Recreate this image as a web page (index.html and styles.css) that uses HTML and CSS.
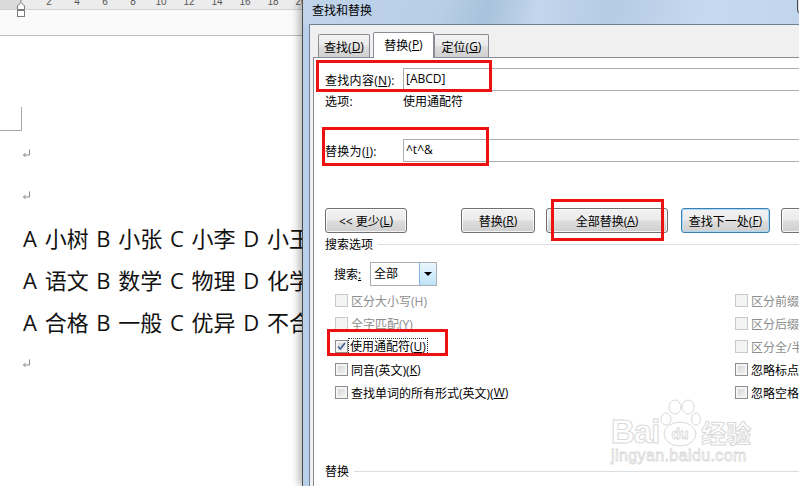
FILE: index.html
```html
<!DOCTYPE html>
<html lang="zh-CN">
<head>
    <meta charset="UTF-8">
    <title>查找和替换</title>
    <link rel="stylesheet" href="styles.css">
</head>
<body>
    <div class="screen">
        <div class="doc">
            <div class="ruler">
                <span class="ruler-margin"></span>
                <div class="ruler-nums">
                    <span>2</span><span>4</span><span>6</span><span>8</span><span>10</span>
                    <span>12</span><span>14</span><span>16</span><span>18</span><span>20</span>
                </div>
            </div>
            <div class="ruler-bar"></div>
            <svg class="indent-marker" width="10" height="19" viewBox="0 0 10 19">
                <path d="M5 0 V2" stroke="#777" fill="none"/>
                <path d="M1.5 9.5 V6 L5 2.5 L8.5 6 V9.5 Z" stroke="#7a7a7a" fill="#fff"/>
                <rect x="1.5" y="10.5" width="7" height="6" stroke="#7a7a7a" fill="#fff"/>
            </svg>
            <div class="page">
                <div class="corner"></div>
                <div class="text-block">
                    <p class="line"><svg class="ret" width="9" height="9" viewBox="0 0 9 9"><path d="M7.5 0.5 V6 H1.5 M3.5 4 L1.5 6 L3.5 8" stroke="#8a8a8a" fill="none"/></svg></p>
                    <p class="line"><svg class="ret" width="9" height="9" viewBox="0 0 9 9"><path d="M7.5 0.5 V6 H1.5 M3.5 4 L1.5 6 L3.5 8" stroke="#8a8a8a" fill="none"/></svg></p>
                    <p class="line">A 小树 B 小张 C 小李 D 小王</p>
                    <p class="line">A 语文 B 数学 C 物理 D 化学</p>
                    <p class="line">A 合格 B 一般 C 优异 D 不合格</p>
                    <p class="line"><svg class="ret" width="9" height="9" viewBox="0 0 9 9"><path d="M7.5 0.5 V6 H1.5 M3.5 4 L1.5 6 L3.5 8" stroke="#8a8a8a" fill="none"/></svg></p>
                </div>
            </div>
        </div>

        <div class="dialog">
            <div class="titlebar">
                <span class="title">查找和替换</span>
            </div>
            <span class="close-btn"></span>
            <div class="client">
                <div class="tabs">
                    <div class="tab tab-find">查找(<u>D</u>)</div>
                    <div class="tab tab-replace active">替换(<u>P</u>)</div>
                    <div class="tab tab-goto">定位(<u>G</u>)</div>
                </div>
                <div class="panel">
                    <div class="field-row find-row">
                        <span class="field-label">查找内容(<u>N</u>):</span>
                        <div class="textbox">[ABCD]</div>
                    </div>
                    <div class="opt-row">
                        <span class="field-label">选项:</span>
                        <span>使用通配符</span>
                    </div>
                    <div class="field-row replace-row">
                        <span class="field-label">替换为(<u>I</u>):</span>
                        <div class="textbox">^t^&amp;</div>
                    </div>
                    <div class="buttons">
                        <div class="btn btn-less">&lt;&lt; 更少(<u>L</u>)</div>
                        <div class="btn btn-replace">替换(<u>R</u>)</div>
                        <div class="btn btn-all">全部替换(<u>A</u>)</div>
                        <div class="btn btn-next default">查找下一处(<u>F</u>)</div>
                        <div class="btn btn-cancel">取消</div>
                    </div>
                    <div class="group-title">搜索选项</div>
                    <div class="search-row">
                        <span class="search-label">搜索<u>:</u></span>
                        <div class="combo">
                            <span class="combo-value">全部</span>
                            <span class="combo-arrow"><i></i></span>
                        </div>
                    </div>
                    <div class="checks">
                        <div class="check-col left">
                            <div class="check disabled"><span class="box"></span>区分大小写(H)</div>
                            <div class="check disabled"><span class="box"></span>全字匹配(Y)</div>
                            <div class="check">
                                <span class="box"><svg width="11" height="11" viewBox="0 0 11 11"><path d="M2 5.5 L4.3 8 L9 2" stroke="#46608f" stroke-width="1.7" fill="none"/></svg></span>
                                <span class="focus">使用通配符(<u>U</u>)</span>
                            </div>
                            <div class="check"><span class="box"></span>同音(英文)(<u>K</u>)</div>
                            <div class="check"><span class="box"></span>查找单词的所有形式(英文)(<u>W</u>)</div>
                        </div>
                        <div class="check-col">
                            <div class="check disabled"><span class="box"></span>区分前缀(X)</div>
                            <div class="check disabled"><span class="box"></span>区分后缀(T)</div>
                            <div class="check disabled"><span class="box"></span>区分全/半角(M)</div>
                            <div class="check"><span class="box"></span>忽略标点符号(<u>S</u>)</div>
                            <div class="check"><span class="box"></span>忽略空格(<u>A</u>)</div>
                        </div>
                    </div>
                    <div class="group-title group-replace">替换</div>
                </div>
            </div>
        </div>

        <!-- red annotation boxes -->
        <div class="mark mark-find"></div>
        <div class="mark mark-replace"></div>
        <div class="mark mark-all"></div>
        <div class="mark mark-wild"></div>

        <div class="watermark">
            <div class="wm-top">
                <span class="wm-bai">Bai</span>
                <svg class="wm-paw" width="42" height="48" viewBox="0 0 42 48">
                    <g fill="none" stroke="#d9d9d9" stroke-width="1">
                        <ellipse cx="7" cy="20" rx="5" ry="6"/>
                        <ellipse cx="16" cy="8" rx="6" ry="7"/>
                        <ellipse cx="29" cy="8" rx="6" ry="7"/>
                        <ellipse cx="37" cy="20" rx="4.5" ry="6"/>
                        <ellipse cx="21" cy="35" rx="16" ry="12"/>
                    </g>
                    <text x="21" y="40" text-anchor="middle" font-family="Liberation Sans, sans-serif" font-size="14" font-weight="bold" fill="#fff" stroke="#d9d9d9" stroke-width="0.8">du</text>
                </svg>
                <span class="wm-jy">经验</span>
            </div>
            <div class="wm-url">jingyan.baidu.com</div>
        </div>
    </div>
</body>
</html>
```

FILE: styles.css
```css
* {
    margin: 0;
    padding: 0;
    box-sizing: border-box;
}

body {
    width: 799px;
    height: 486px;
    overflow: hidden;
    background-color: #fff;
    font-family: "Open Sans", "Noto Sans CJK SC", sans-serif;
    font-size: 12px;
    color: #000;
}

u {
    text-decoration: underline;
    text-underline-offset: 1px;
}

.screen {
    position: relative;
    display: flex;
    width: 799px;
    height: 486px;
    overflow: hidden;
}

/* ---- word document behind ---- */

.doc {
    position: relative;
    width: 302px;
    flex-shrink: 0;
    display: flex;
    flex-direction: column;
    background-color: #fff;
    overflow: hidden;
}

.ruler {
    display: flex;
    height: 10px;
    background-color: #ececec;
    border-bottom: 1px solid #d2d2d2;
    overflow: hidden;
}

.ruler-margin {
    width: 21px;
    flex-shrink: 0;
    background-color: #dadada;
}

.ruler-nums {
    display: flex;
    padding-left: 14px;
    margin-top: -4px;
}

.ruler-nums span {
    width: 28px;
    flex-shrink: 0;
    text-align: center;
    font-family: "Liberation Sans", sans-serif;
    font-size: 10px;
    line-height: 12px;
    color: #555;
}

.ruler-bar {
    height: 26px;
    background-color: #fafafa;
    border-bottom: 1px solid #bdbdbd;
}

.indent-marker {
    position: absolute;
    left: 16px;
    top: 0;
}

.page {
    flex: 1;
}

.corner {
    width: 22px;
    height: 24px;
    margin-top: 71px;
    border-right: 1px solid #a8a8a8;
    border-bottom: 1px solid #a8a8a8;
}

.text-block {
    margin-top: 1px;
}

.line {
    display: flex;
    align-items: center;
    height: 42px;
    padding-left: 23px;
    font-size: 22px;
    word-spacing: 2px;
    color: #111;
    white-space: nowrap;
}

.ret {
    margin-left: -1px;
}

/* ---- dialog ---- */

.dialog {
    position: relative;
    width: 560px;
    flex-shrink: 0;
    display: flex;
    flex-direction: column;
    background-color: #b9d0ea;
    border-left: 1px solid #4d4d4d;
    box-shadow: -3px 0 8px rgba(0, 0, 0, 0.3);
}

.titlebar {
    height: 24px;
    display: flex;
    align-items: center;
    padding: 0 0 3px 9px;
    background: linear-gradient(105deg, #c0d4ea 0%, #b8cee7 25%, #a9c1dc 33%, #c2d6ec 42%, #b5cbe5 55%, #c6d9ee 72%, #bdd2ea 100%);
}

.title {
    font-size: 12px;
    line-height: 16px;
}

.close-btn {
    position: absolute;
    left: 494px;
    top: -1px;
    width: 44px;
    height: 15px;
    border: 1px solid #4a4a4a;
    border-radius: 0 0 4px 4px;
    background-color: #d7dde5;
}

.client {
    flex: 1;
    display: flex;
    flex-direction: column;
    margin-left: 6px;
    padding-left: 3px;
    background-color: #f0f0f0;
    border-top: 1px solid #6f8196;
    border-left: 1px solid #6f8196;
}

.tabs {
    height: 32px;
    display: flex;
    align-items: flex-end;
    padding-left: 5px;
}

.tab {
    height: 23px;
    display: flex;
    align-items: center;
    justify-content: center;
    border: 1px solid #898c95;
    border-bottom: none;
    border-radius: 2px 2px 0 0;
    background: linear-gradient(#f3f3f3, #ebebeb 45%, #dddddd 55%, #d0d0d0);
    font-size: 12px;
    padding-top: 1px;
}

.tab-find {
    width: 52px;
    margin-right: 3px;
}

.tab-replace {
    width: 61px;
}

.tab-goto {
    width: 55px;
}

.tab.active {
    position: relative;
    z-index: 1;
    height: 26px;
    margin-bottom: -1px;
    background: #fff;
    padding-top: 0;
    padding-bottom: 2px;
}

.panel {
    flex: 1;
    display: flex;
    flex-direction: column;
    background-color: #fff;
    border-top: 1px solid #898c95;
    border-left: 1px solid #898c95;
}

.field-row {
    display: flex;
    align-items: center;
    height: 23px;
    padding-left: 11px;
}

.find-row {
    margin-top: 10px;
}

.replace-row {
    margin-top: 28px;
}

.field-label {
    width: 78px;
    flex-shrink: 0;
    letter-spacing: 0.3px;
}

.textbox {
    flex: 1;
    height: 23px;
    padding-left: 2px;
    border: 1px solid #abadb3;
    line-height: 20px;
    font-size: 12px;
}

.opt-row {
    display: flex;
    align-items: center;
    height: 20px;
    padding-left: 11px;
}

.buttons {
    display: flex;
    height: 25px;
    margin-top: 46px;
    padding-left: 11px;
}

.btn {
    height: 25px;
    flex-shrink: 0;
    display: flex;
    align-items: center;
    justify-content: center;
    border: 1px solid #707070;
    border-radius: 3px;
    background: linear-gradient(#f2f2f2, #ebebeb 48%, #dddddd 52%, #cfcfcf);
    box-shadow: inset 0 0 0 1px rgba(255, 255, 255, 0.75);
    font-size: 12px;
}

.btn.default {
    border-color: #3c7fb1;
    box-shadow: inset 0 0 0 1px #a9d8f7;
}

.btn-less { width: 82px; margin-right: 54px; }
.btn-replace { width: 74px; margin-right: 11px; }
.btn-all { width: 122px; margin-right: 13px; }
.btn-next { width: 89px; margin-right: 11px; }
.btn-cancel { width: 75px; }

.group-title {
    display: flex;
    align-items: center;
    height: 22px;
    padding-left: 11px;
}

.group-title::after {
    content: "";
    flex: 1;
    height: 1px;
    margin-left: 5px;
    background-color: #d5dfe5;
}

.group-replace {
    margin-top: 56px;
}

.search-row {
    display: flex;
    align-items: center;
    height: 24px;
    margin-top: 7px;
    padding-left: 20px;
}

.search-label {
    width: 36px;
}

.combo {
    width: 67px;
    height: 24px;
    display: flex;
    border: 1px solid #abadb3;
}

.combo-value {
    flex: 1;
    padding-left: 3px;
    line-height: 21px;
}

.combo-arrow {
    width: 17px;
    display: flex;
    align-items: center;
    justify-content: center;
    background: linear-gradient(#eaf6fd, #d4edfb 50%, #bee3f8);
    border-left: 1px solid #7eb4ea;
}

.combo-arrow i {
    width: 0;
    height: 0;
    border-left: 4px solid transparent;
    border-right: 4px solid transparent;
    border-top: 4px solid #000;
}

.checks {
    display: flex;
    margin-top: 3px;
    padding-left: 21px;
}

.check-col {
    display: flex;
    flex-direction: column;
}

.check-col.left {
    width: 400px;
}

.check {
    display: flex;
    align-items: center;
    height: 23px;
    white-space: nowrap;
}

.box {
    width: 13px;
    height: 13px;
    flex-shrink: 0;
    margin-right: 3px;
    display: flex;
    align-items: center;
    justify-content: center;
    border: 1px solid #8f8f8f;
    background: linear-gradient(135deg, #cdd1d6, #f6f6f6);
    box-shadow: inset 0 0 0 2px #f4f4f4;
}

.check.disabled {
    color: #8d8d8d;
}

.check.disabled .box {
    border-color: #c9c9c9;
    background: #f4f4f4;
    box-shadow: none;
}

.focus {
    margin-left: -3px;
    padding: 0 1px;
    border: 1px dotted #333;
    line-height: 15px;
}

/* ---- annotation marks ---- */

.mark {
    position: absolute;
    border: 3px solid #ee1111;
}

.mark-find { left: 316px; top: 60px; width: 176px; height: 32px; }
.mark-replace { left: 322px; top: 127px; width: 167px; height: 39px; }
.mark-all { left: 551px; top: 199px; width: 113px; height: 42px; }
.mark-wild { left: 327px; top: 329px; width: 121px; height: 27px; }

/* ---- watermark ---- */

.watermark {
    position: absolute;
    left: 611px;
    top: 399px;
    display: flex;
    flex-direction: column;
    align-items: flex-start;
}

.wm-top {
    display: flex;
    align-items: flex-end;
    height: 48px;
}

.wm-bai {
    font-family: "Liberation Sans", sans-serif;
    font-size: 33px;
    font-weight: bold;
    line-height: 30px;
    letter-spacing: -1px;
    color: #fff;
    -webkit-text-stroke: 1px #d9d9d9;
}

.wm-jy {
    font-family: "Noto Sans CJK SC", sans-serif;
    font-size: 25px;
    font-weight: bold;
    line-height: 30px;
    color: #fff;
    -webkit-text-stroke: 1px #d9d9d9;
}

.wm-url {
    font-family: "Liberation Sans", sans-serif;
    font-size: 16px;
    line-height: 18px;
    letter-spacing: 0.4px;
    color: #fff;
    -webkit-text-stroke: 0.8px #d9d9d9;
}
```
